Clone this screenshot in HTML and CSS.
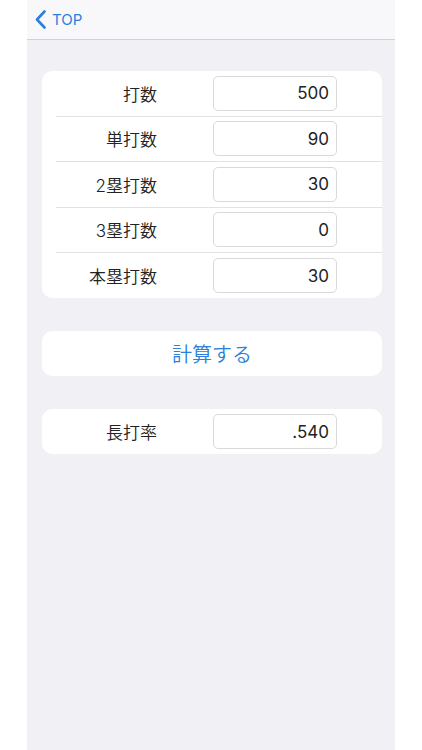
FILE: index.html
```html
<!DOCTYPE html>
<html lang="ja">

<head>
    <meta charset="utf-8">
    <title>長打率</title>
    <link rel="stylesheet" href="styles.css">
</head>

<body>
    <section class="screen">
        <nav class="navbar">
            <a class="back" href="#">
                <svg class="chevron" width="11" height="19" viewBox="0 0 11 19">
                    <path d="M9.5 1.5 L2 9.5 L9.5 17.5" fill="none" stroke="currentColor" stroke-width="2.6" stroke-linecap="round" stroke-linejoin="round"/>
                </svg>
                <span>TOP</span>
            </a>
        </nav>

        <div class="content">
            <div class="card">
                <div class="row">
                    <div class="label">打数</div>
                    <input class="field" type="text" value="500">
                </div>
                <div class="row">
                    <div class="label">単打数</div>
                    <input class="field" type="text" value="90">
                </div>
                <div class="row">
                    <div class="label">2塁打数</div>
                    <input class="field" type="text" value="30">
                </div>
                <div class="row">
                    <div class="label">3塁打数</div>
                    <input class="field" type="text" value="0">
                </div>
                <div class="row">
                    <div class="label">本塁打数</div>
                    <input class="field" type="text" value="30">
                </div>
            </div>

            <div class="card">
                <button class="calc" type="button">計算する</button>
            </div>

            <div class="card">
                <div class="row">
                    <div class="label">長打率</div>
                    <input class="field" type="text" value=".540" readonly>
                </div>
            </div>
        </div>
    </section>
</body>

</html>
```

FILE: styles.css
```css
html, body
{
    margin: 0;
    background: #fff;
}

body, input, button
{
    color: #222;
    font-family: Inter, "Noto Sans CJK JP", sans-serif;
    font-size: 17px;
}

.screen {
    width: 368px;
    min-height: 750px;
    margin-left: 27px;
    background: #f0f0f5;
}

.navbar {
    height: 39px;
    display: flex;
    align-items: center;
    padding-left: 8px;
    background: #f8f8fa;
    border-bottom: 1px solid #d2d2d6;
}

.back {
    display: flex;
    align-items: center;
    gap: 6px;
    color: #2b80dc;
    text-decoration: none;
    font-size: 15px;
}

.chevron {
    display: block;
}

.content {
    display: flex;
    flex-direction: column;
    gap: 33px;
    padding-top: 31px;
}

.card {
    margin: 0 13px 0 15px;
    background: #fff;
    border-radius: 10px;
}

.row {
    box-sizing: border-box;
    height: 45.5px;
    margin-left: 14px;
    display: flex;
    align-items: center;
    border-bottom: 1px solid #e2e2e5;
}

.row:last-child {
    border-bottom: none;
    height: 45px;
}

.label {
    width: 101px;
    text-align: right;
    font-weight: 350;
}

.field {
    box-sizing: border-box;
    width: 124px;
    height: 35px;
    margin-left: 56px;
    padding: 0 7px 0 0;
    border: 1px solid #d9d9dc;
    border-radius: 5px;
    background: #fff;
    text-align: right;
    outline: none;
}

.calc {
    display: block;
    width: 100%;
    height: 45px;
    border: none;
    background: none;
    color: #2b80dc;
    font-size: 20px;
    font-weight: 350;
    cursor: pointer;
}
```
